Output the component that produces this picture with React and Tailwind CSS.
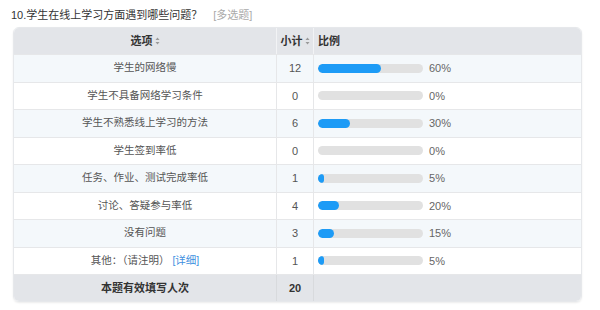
const rows = [
  { label: '学生的网络慢', count: 12, pct: 60 },
  { label: '学生不具备网络学习条件', count: 0, pct: 0 },
  { label: '学生不熟悉线上学习的方法', count: 6, pct: 30 },
  { label: '学生签到率低', count: 0, pct: 0 },
  { label: '任务、作业、测试完成率低', count: 1, pct: 5 },
  { label: '讨论、答疑参与率低', count: 4, pct: 20 },
  { label: '没有问题', count: 3, pct: 15 },
  { label: '其他：（请注明）', count: 1, pct: 5, detail: true },
]

function SortIcon() {
  return (
    <svg width="5" height="8" viewBox="0 0 5 8" className="inline-block ml-[2px] -mt-[1px]">
      <path d="M2.5 0.5 L4.5 3 L0.5 3 Z" fill="#999" />
      <path d="M2.5 7.5 L4.5 5 L0.5 5 Z" fill="#999" />
    </svg>
  )
}

function Bar({ pct }) {
  return (
    <div className="flex items-center">
      <div className="w-[105px] h-[9px] rounded-full bg-[#e1e1e1] overflow-hidden">
        {pct > 0 && <div className="h-full rounded-full bg-[#1d9bf6]" style={{ width: `${Math.max(pct, 6)}%` }} />}
      </div>
      <span className="ml-[6px] text-[11px] text-[#666]">{pct}%</span>
    </div>
  )
}

export default function App() {
  return (
    <div className="w-[600px] h-[310px] bg-white pt-[7px] pl-[11px] font-['Liberation_Sans','Noto_Sans_CJK_SC',sans-serif]">
      <div className="text-[11px] leading-[16px] text-[#333] mb-[4px]">
        10.学生在线上学习方面遇到哪些问题？
        <span className="ml-[11px] text-[#aaa]">[多选题]</span>
      </div>

      <div className="ml-[2px] w-[569px] rounded-[6px] overflow-hidden border border-[#e6e8eb] shadow-[0_1px_2px_rgba(0,0,0,0.08)]">
        <div className="grid grid-cols-[263px_37px_1fr] h-[26px] bg-[#e3e5e9] text-[11px] font-bold text-[#333]">
          <div className="flex items-center justify-center border-r border-[#f2f3f5]">选项<SortIcon /></div>
          <div className="flex items-center justify-center border-r border-[#f2f3f5]">小计<SortIcon /></div>
          <div className="flex items-center pl-[4px]">比例</div>
        </div>

        {rows.map((r, i) => (
          <div
            key={i}
            className={`grid grid-cols-[263px_37px_1fr] h-[27.5px] text-[11px] text-[#555] border-t border-[#e6e7e9] ${i % 2 === 0 ? 'bg-[#f4f8fb]' : 'bg-white'}`}
          >
            <div className="flex items-center justify-center text-[10.5px] border-r border-[#e6e7e9]">
              {r.label}
              {r.detail && <span className="ml-[3px] text-[#3d8fe0]">[详细]</span>}
            </div>
            <div className="flex items-center justify-center border-r border-[#e6e7e9]">{r.count}</div>
            <div className="flex items-center pl-[4px]">
              <Bar pct={r.pct} />
            </div>
          </div>
        ))}

        <div className="grid grid-cols-[263px_37px_1fr] h-[27px] bg-[#e3e5e9] text-[11px] font-bold text-[#333] border-t border-[#e6e7e9]">
          <div className="flex items-center justify-center border-r border-[#d8dadd]">本题有效填写人次</div>
          <div className="flex items-center justify-center border-r border-[#d8dadd]">20</div>
          <div />
        </div>
      </div>
    </div>
  )
}
